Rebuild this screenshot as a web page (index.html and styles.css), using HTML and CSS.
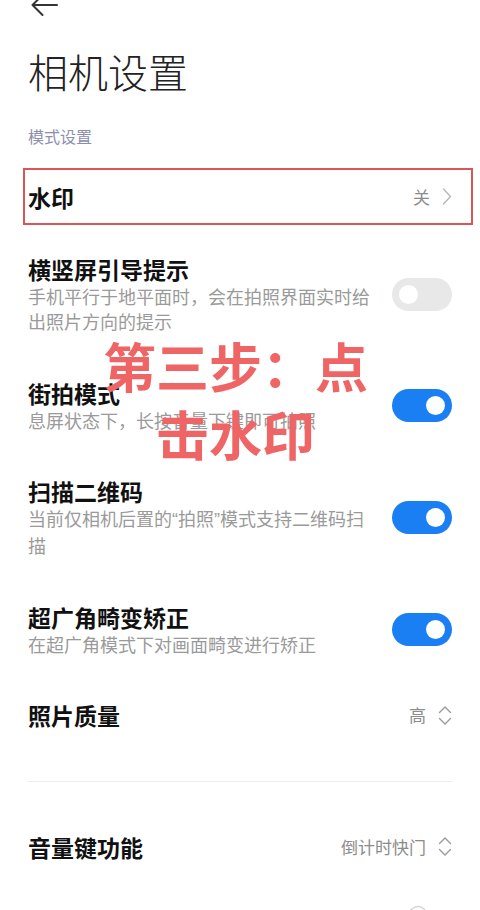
FILE: index.html
```html
<!DOCTYPE html>
<html lang="zh-CN">
<head>
<meta charset="utf-8">
<title>相机设置</title>
<link rel="stylesheet" href="styles.css">
</head>
<body>
<div class="page">
  <header class="topbar">
    <svg class="back" viewBox="0 0 28 28" width="28" height="28"><path d="M27 14H2.5M12.5 4L2.5 14l10 10" fill="none" stroke="#333" stroke-width="2" stroke-linecap="round" stroke-linejoin="round"/></svg>
  </header>
  <h1 class="title">相机设置</h1>
  <div class="section-label">模式设置</div>

  <div class="row row-boxed">
    <div class="row-text"><div class="row-title">水印</div></div>
    <div class="row-value">关<svg class="chev" viewBox="0 0 10 17" width="10" height="17"><path d="M1.5 1l7 7.5-7 7.5" fill="none" stroke="#b8b8b8" stroke-width="1.4" stroke-linecap="round" stroke-linejoin="round"/></svg></div>
  </div>

  <div class="rows">
    <div class="row">
      <div class="row-text">
        <div class="row-title">横竖屏引导提示</div>
        <div class="row-desc">手机平行于地平面时，会在拍照界面实时给出照片方向的提示</div>
      </div>
      <div class="switch"></div>
    </div>
    <div class="row">
      <div class="row-text">
        <div class="row-title">街拍模式</div>
        <div class="row-desc">息屏状态下，长按音量下键即可拍照</div>
      </div>
      <div class="switch on"></div>
    </div>
    <div class="row">
      <div class="row-text">
        <div class="row-title">扫描二维码</div>
        <div class="row-desc">当前仅相机后置的<span class="q">“</span>拍照<span class="q">”</span>模式支持二维码扫描</div>
      </div>
      <div class="switch on"></div>
    </div>
    <div class="row">
      <div class="row-text">
        <div class="row-title">超广角畸变矫正</div>
        <div class="row-desc">在超广角模式下对画面畸变进行矫正</div>
      </div>
      <div class="switch on"></div>
    </div>
    <div class="row">
      <div class="row-text"><div class="row-title">照片质量</div></div>
      <div class="row-value">高<svg class="updown" viewBox="0 0 14 21" width="14" height="21"><path d="M1.5 7.5L7 2l5.5 5.5M1.5 13.5L7 19l5.5-5.5" fill="none" stroke="#9a9a9a" stroke-width="1.4" stroke-linecap="round" stroke-linejoin="round"/></svg></div>
    </div>
  </div>

  <div class="divider"></div>

  <div class="row">
    <div class="row-text"><div class="row-title">音量键功能</div></div>
    <div class="row-value">倒计时快门<svg class="updown" viewBox="0 0 14 21" width="14" height="21"><path d="M1.5 7.5L7 2l5.5 5.5M1.5 13.5L7 19l5.5-5.5" fill="none" stroke="#9a9a9a" stroke-width="1.4" stroke-linecap="round" stroke-linejoin="round"/></svg></div>
  </div>
  <div class="row row-peek">
    <svg class="peek-icon" viewBox="0 0 20 20" width="20" height="20"><circle cx="10" cy="10" r="8.5" fill="none" stroke="#d4d4d4" stroke-width="1.5"/></svg>
  </div>

  <div class="overlay">第三步：点<br>击水印</div>
</div>
</body>
</html>
```

FILE: styles.css
```css
* {
  box-sizing: border-box;
  margin: 0;
  padding: 0;
}

html,
body {
  background: #ffffff;
}

body {
  width: 480px;
  height: 910px;
  overflow: hidden;
  font-family: "Noto Sans CJK SC", "Noto Sans", sans-serif;
  color: #111;
}

.page {
  position: relative;
  padding: 0 28px;
}

.topbar {
  height: 20px;
}

.back {
  display: block;
  margin: -9px 0 0 2px;
}

.title {
  font-family: "Noto Sans CJK SC Light", "Noto Sans CJK SC", sans-serif;
  font-size: 40px;
  line-height: 48px;
  font-weight: 300;
  color: #222;
  margin-top: 36px;
}

.section-label {
  font-size: 16px;
  line-height: 20px;
  color: #8b8fae;
  margin-top: 31px;
}

.row {
  display: flex;
  align-items: center;
  gap: 12px;
  padding: 21px 0 22.5px;
}

.row-boxed {
  height: 57px;
  margin: 22px -21px 8px -5px;
  padding: 0 19px 0 3px;
  border: 2px solid #dc5555;
}

.row-text {
  flex: 1;
  min-width: 0;
}

.row-title {
  font-size: 23px;
  line-height: 30px;
  font-weight: 700;
  color: #111;
}

.row-desc {
  font-size: 18px;
  line-height: 25px;
  color: #9a9a9a;
}

.q {
  font-family: "Liberation Sans", sans-serif;
}

.row-value {
  display: flex;
  align-items: center;
  gap: 12px;
  font-size: 17px;
  line-height: 30px;
  color: #8c8c8c;
}

.chev,
.updown {
  display: block;
  flex: none;
}

.switch {
  flex: none;
  display: flex;
  align-items: center;
  width: 60px;
  height: 33px;
  padding: 0 7px;
  border-radius: 17px;
  background: #e8e8e8;
}

.switch::after {
  content: "";
  width: 19px;
  height: 19px;
  border-radius: 50%;
  background: #fff;
}

.switch.on {
  background: #1a7ff2;
  justify-content: flex-end;
}

.divider {
  height: 1px;
  background: #eeeeee;
  margin: 28.5px 0;
}

.row-peek {
  justify-content: flex-end;
  align-items: flex-start;
  padding-top: 21px;
}

.peek-icon {
  display: block;
  margin-right: 24px;
}

.overlay {
  position: absolute;
  top: 340px;
  left: 0;
  width: 471px;
  text-align: center;
  font-size: 53px;
  line-height: 68px;
  font-weight: 700;
  color: #ef6565;
  pointer-events: none;
}
```
